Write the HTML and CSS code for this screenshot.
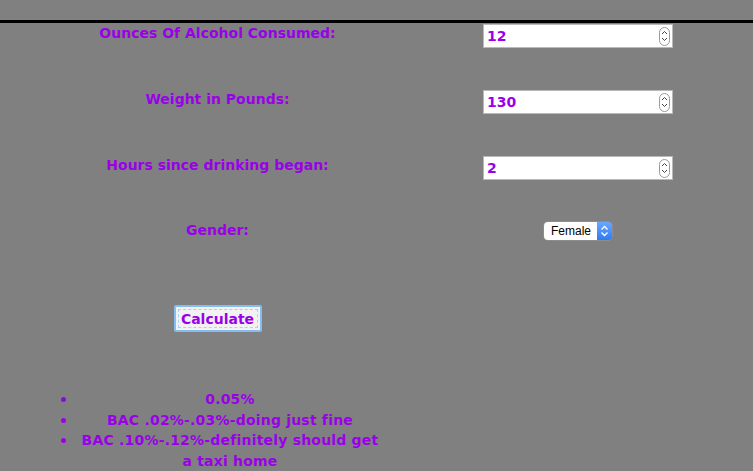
FILE: index.html
```html
<!DOCTYPE html>
<html>
<head>
<meta charset="utf-8">
<link rel="stylesheet" href="styles.css">
</head>
<body>
<div class="topbar"></div>
<form class="bac-form">
  <div class="row">
    <label class="label">Ounces Of Alcohol Consumed:</label>
    <div class="field">
      <div class="num-input"><span class="num-value">12</span><span class="spinner"><svg width="9" height="16" viewBox="0 0 9 16"><path d="M2 6 L4.5 3.5 L7 6 M2 10 L4.5 12.5 L7 10" fill="none" stroke="#444" stroke-width="1"/></svg></span></div>
    </div>
  </div>
  <div class="row">
    <label class="label">Weight in Pounds:</label>
    <div class="field">
      <div class="num-input"><span class="num-value">130</span><span class="spinner"><svg width="9" height="16" viewBox="0 0 9 16"><path d="M2 6 L4.5 3.5 L7 6 M2 10 L4.5 12.5 L7 10" fill="none" stroke="#444" stroke-width="1"/></svg></span></div>
    </div>
  </div>
  <div class="row">
    <label class="label">Hours since drinking began:</label>
    <div class="field">
      <div class="num-input"><span class="num-value">2</span><span class="spinner"><svg width="9" height="16" viewBox="0 0 9 16"><path d="M2 6 L4.5 3.5 L7 6 M2 10 L4.5 12.5 L7 10" fill="none" stroke="#444" stroke-width="1"/></svg></span></div>
    </div>
  </div>
  <div class="row row-gender">
    <label class="label">Gender:</label>
    <div class="field">
      <div class="select"><span class="select-text">Female</span><span class="select-arrow"><svg width="9" height="12" viewBox="0 0 9 12"><path d="M1.5 4.5 L4.5 1.5 L7.5 4.5 M1.5 7.5 L4.5 10.5 L7.5 7.5" fill="none" stroke="#fff" stroke-width="1.4"/></svg></span></div>
    </div>
  </div>
  <div class="row row-button">
    <div class="btn-cell"><button type="button" class="calc-btn">Calculate</button></div>
  </div>
</form>
<ul class="results">
  <li>0.05%</li>
  <li>BAC .02%-.03%-doing just fine</li>
  <li>BAC .10%-.12%-definitely should get a taxi home</li>
</ul>
</body>
</html>
```

FILE: styles.css
```css
html, body {
  margin: 0;
  padding: 0;
  background: #808080;
  font-family: "DejaVu Sans", Verdana, sans-serif;
  font-weight: bold;
  color: #9a00e8;
  overflow: hidden;
}
.topbar {
  height: 20px;
  border-bottom: 3px solid #000;
}
.bac-form {
  width: 721px;
}
.row {
  display: grid;
  grid-template-columns: 435px 286px;
  height: 66px;
  align-items: start;
}
.label {
  text-align: center;
  font-size: 14px;
  line-height: 17px;
  padding-top: 2px;
}
.field {
  display: flex;
  justify-content: center;
  padding-top: 1px;
}
.num-input {
  width: 188px;
  height: 22px;
  background: #fff;
  border: 1px solid #b9b9b9;
  display: flex;
  align-items: center;
  justify-content: space-between;
}
.num-value {
  font-size: 14px;
  padding-left: 3px;
  color: #9a00e8;
}
.spinner {
  width: 11px;
  height: 19px;
  border: 1px solid #9a9a9a;
  border-radius: 6px;
  margin-right: 2px;
  display: flex;
  align-items: center;
  justify-content: center;
  box-sizing: border-box;
}
.row-gender .label {
  padding-top: 1px;
}
.row-gender .field {
  padding-top: 0;
}
.select {
  width: 68px;
  height: 18px;
  display: flex;
  border-radius: 4px;
  overflow: hidden;
  box-shadow: 0 0 0 0.5px #9a9a9a;
  margin-top: 1px;
}
.select-text {
  flex: 1;
  background: #fff;
  color: #000;
  font-family: "Liberation Sans", Arial, sans-serif;
  font-weight: normal;
  font-size: 12px;
  line-height: 18px;
  padding-left: 7px;
}
.select-arrow {
  width: 15px;
  background: linear-gradient(#6aa8ff, #2f7bf5);
  display: flex;
  align-items: center;
  justify-content: center;
}
.row-button {
  height: 102px;
}
.btn-cell {
  display: flex;
  justify-content: center;
  padding-top: 18px;
}
.calc-btn {
  width: 88px;
  height: 27px;
  font-family: "DejaVu Sans", Verdana, sans-serif;
  font-weight: bold;
  font-size: 14px;
  color: #9a00e8;
  background: #f2f2f2;
  border: 2px solid #86bdf0;
  outline: 1px dashed #a9d2f7;
  outline-offset: -5px;
  border-radius: 2px;
  padding: 0;
}
.results {
  margin: 0;
  padding: 0 0 0 80px;
  width: 300px;
  text-align: center;
  font-size: 14px;
  line-height: 20.5px;
  letter-spacing: 0.2px;
}
.results li {
  list-style: none;
  position: relative;
}
.results li::before {
  content: "";
  position: absolute;
  left: -19px;
  top: 8px;
  width: 5px;
  height: 5px;
  border-radius: 50%;
  background: currentColor;
}
```
